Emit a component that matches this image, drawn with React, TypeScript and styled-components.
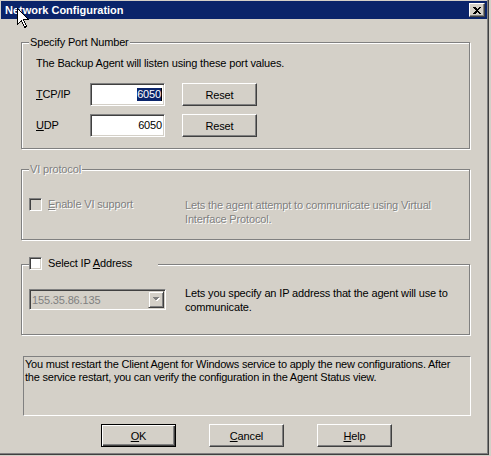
import React from 'react'
import styled, { createGlobalStyle } from 'styled-components'

const GlobalStyle = createGlobalStyle`
  html, body {
    margin: 0;
    padding: 0;
    background: #d4d0c8;
  }
  body {
    font-family: "Liberation Sans", Arial, sans-serif;
    font-size: 11px;
    letter-spacing: -0.15px;
    color: #000;
  }
`

const Window = styled.div`
  position: relative;
  box-sizing: border-box;
  width: 489px;
  height: 455px;
  padding: 1px 0 0 1px;
  background: #d4d0c8;
  border-right: 1px solid #404040;
  border-bottom: 1px solid #404040;
  box-shadow: inset -1px -1px 0 #808080;
  display: flex;
  flex-direction: column;
`

const TitleBar = styled.div`
  height: 18px;
  margin-right: 1px;
  background: #0a246a;
  color: #fff;
  display: flex;
  align-items: center;
  justify-content: space-between;
  padding: 0 2px 0 4px;
`

const TitleText = styled.span`
  font-weight: bold;
  font-size: 11px;
  line-height: 13px;
  letter-spacing: 0;
`

const CloseButton = styled.div`
  box-sizing: border-box;
  width: 16px;
  height: 14px;
  background: #d4d0c8;
  border: 1px solid;
  border-color: #fff #404040 #404040 #fff;
  box-shadow: inset -1px -1px 0 #808080;
  display: flex;
  align-items: center;
  justify-content: center;
`

const Cursor = styled.svg`
  position: absolute;
  left: 17px;
  top: 8px;
  pointer-events: none;
`

const Body = styled.div`
  display: flex;
  flex-direction: column;
  padding: 23px 0 0 20px;
`

const Group = styled.div<{ $h: number; $gap?: number }>`
  position: relative;
  box-sizing: border-box;
  width: 449px;
  height: ${p => p.$h}px;
  margin-bottom: ${p => p.$gap ?? 0}px;
  border: 1px solid #808080;
  box-shadow: inset 1px 1px 0 #fff, 1px 1px 0 #fff;
`

const Legend = styled.div<{ $disabled?: boolean }>`
  position: absolute;
  top: -7px;
  left: 7px;
  padding: 0 1px;
  line-height: 13px;
  background: #d4d0c8;
  color: ${p => (p.$disabled ? '#808080' : '#000')};
  text-shadow: ${p => (p.$disabled ? '1px 1px 0 #fff' : 'none')};
`

const CheckLegend = styled.div`
  position: absolute;
  top: -8px;
  left: 7px;
  width: 129px;
  height: 13px;
  background: #d4d0c8;
  display: flex;
  align-items: center;
  gap: 6px;
`

const PortBody = styled.div`
  padding: 14px 0 0 14px;
  display: flex;
  flex-direction: column;
`

const Intro = styled.div`
  line-height: 13px;
  margin-bottom: 13px;
`

const PortRow = styled.div`
  display: flex;
  align-items: center;
  margin-bottom: 8px;
`

const PortLabel = styled.span`
  width: 54px;
  line-height: 13px;
`

const Key = styled.span`
  text-decoration: underline;
`

const PortInput = styled.div`
  box-sizing: border-box;
  width: 75px;
  height: 23px;
  margin-right: 17px;
  background: #fff;
  border: 1px solid;
  border-color: #808080 #fff #fff #808080;
  box-shadow: inset 1px 1px 0 #404040, inset -1px -1px 0 #d4d0c8;
  display: flex;
  align-items: center;
  justify-content: flex-end;
  padding-right: 2px;
  line-height: 13px;
`

const Selected = styled.span`
  background: #0a246a;
  color: #fff;
  border-right: 1px solid #000;
`

const Button = styled.button<{ $default?: boolean }>`
  box-sizing: border-box;
  width: 75px;
  height: 23px;
  padding: 0;
  margin: 0;
  background: #d4d0c8;
  font-family: "Liberation Sans", Arial, sans-serif;
  font-size: 11px;
  letter-spacing: -0.15px;
  color: #000;
  border: 1px solid;
  border-color: ${p => (p.$default ? '#000' : '#fff #404040 #404040 #fff')};
  box-shadow: ${p =>
    p.$default
      ? 'inset 1px 1px 0 #fff, inset -1px -1px 0 #404040, inset -2px -2px 0 #808080'
      : 'inset -1px -1px 0 #808080'};
`

const OptionRow = styled.div<{ $top: number }>`
  display: flex;
  align-items: flex-start;
  padding: ${p => p.$top}px 0 0 7px;
`

const LeftCol = styled.div`
  width: 156px;
  display: flex;
  align-items: center;
  gap: 6px;
`

const Checkbox = styled.span<{ $disabled?: boolean }>`
  box-sizing: border-box;
  flex: none;
  width: 13px;
  height: 13px;
  background: ${p => (p.$disabled ? '#d4d0c8' : '#fff')};
  border: 1px solid;
  border-color: #808080 #fff #fff #808080;
  box-shadow: inset 1px 1px 0 #404040, inset -1px -1px 0 #d4d0c8;
`

const OptionLabel = styled.span<{ $disabled?: boolean }>`
  line-height: 13px;
  color: ${p => (p.$disabled ? '#808080' : '#000')};
  text-shadow: ${p => (p.$disabled ? '1px 1px 0 #fff' : 'none')};
`

const Desc = styled.div<{ $disabled?: boolean }>`
  width: 275px;
  line-height: 14px;
  color: ${p => (p.$disabled ? '#808080' : '#000')};
  text-shadow: ${p => (p.$disabled ? '1px 1px 0 #fff' : 'none')};
`

const Combo = styled.div`
  box-sizing: border-box;
  width: 137px;
  height: 21px;
  margin-top: 3px;
  border: 1px solid;
  border-color: #808080 #fff #fff #808080;
  box-shadow: inset 1px 1px 0 #404040, inset -1px -1px 0 #d4d0c8;
  padding: 1px 1px 1px 2px;
  display: flex;
  align-items: center;
  justify-content: space-between;
  color: #808080;
`

const ComboArrow = styled.div`
  box-sizing: border-box;
  width: 16px;
  height: 17px;
  background: #d4d0c8;
  border: 1px solid;
  border-color: #d4d0c8 #404040 #404040 #d4d0c8;
  box-shadow: inset 1px 1px 0 #fff, inset -1px -1px 0 #808080;
  display: flex;
  align-items: center;
  justify-content: center;
`

const Message = styled.div`
  box-sizing: border-box;
  width: 448px;
  height: 60px;
  margin: 21px 0 0 2px;
  padding: 1px 0 0 1px;
  border: 1px solid;
  border-color: #808080 #fff #fff #808080;
  line-height: 13px;
  letter-spacing: -0.22px;
  white-space: nowrap;
`

const ButtonBar = styled.div`
  display: flex;
  gap: 33px;
  margin: 8px 0 0 80px;
`

export default function App() {
  return (
    <>
      <GlobalStyle />
      <Window>
        <TitleBar>
          <TitleText>Network Configuration</TitleText>
          <CloseButton>
            <svg width="8" height="7" viewBox="0 0 8 7" shapeRendering="crispEdges">
              <path d="M0 0h2l2 2 2-2h2v1L5 3.5 8 6v1H6L4 5 2 7H0V6l3-2.5L0 1z" fill="#000" />
            </svg>
          </CloseButton>
        </TitleBar>

        <Body>
          <Group $h={107} $gap={20}>
            <Legend>Specify Port Number</Legend>
            <PortBody>
              <Intro>The Backup Agent will listen using these port values.</Intro>
              <PortRow>
                <PortLabel><Key>T</Key>CP/IP</PortLabel>
                <PortInput><Selected>6050</Selected></PortInput>
                <Button>Reset</Button>
              </PortRow>
              <PortRow>
                <PortLabel><Key>U</Key>DP</PortLabel>
                <PortInput>6050</PortInput>
                <Button>Reset</Button>
              </PortRow>
            </PortBody>
          </Group>

          <Group $h={71} $gap={24}>
            <Legend $disabled>VI protocol</Legend>
            <OptionRow $top={28}>
              <LeftCol>
                <Checkbox $disabled />
                <OptionLabel $disabled><Key>E</Key>nable VI support</OptionLabel>
              </LeftCol>
              <Desc $disabled>
                Lets the agent attempt to communicate using Virtual Interface Protocol.
              </Desc>
            </OptionRow>
          </Group>

          <Group $h={71}>
            <CheckLegend>
              <Checkbox />
              <OptionLabel>Select IP <Key>A</Key>ddress</OptionLabel>
            </CheckLegend>
            <OptionRow $top={21}>
              <LeftCol>
                <Combo>
                  <span>155.35.86.135</span>
                  <ComboArrow>
                    <svg width="8" height="5" viewBox="0 0 8 5" shapeRendering="crispEdges">
                      <path d="M1 1h7L4.5 4.5z" fill="#fff" />
                      <path d="M0 0h7L3.5 3.5z" fill="#808080" />
                    </svg>
                  </ComboArrow>
                </Combo>
              </LeftCol>
              <Desc>
                Lets you specify an IP address that the agent will use to communicate.
              </Desc>
            </OptionRow>
          </Group>

          <Message>
            You must restart the Client Agent for Windows service to apply the new configurations. After
            <br />
            the service restart, you can verify the configuration in the Agent Status view.
          </Message>

          <ButtonBar>
            <Button $default><Key>O</Key>K</Button>
            <Button><Key>C</Key>ancel</Button>
            <Button><Key>H</Key>elp</Button>
          </ButtonBar>
        </Body>

        <Cursor width="13" height="21" viewBox="0 0 13 21" shapeRendering="crispEdges">
          <path
            d="M0.5 0.5 L0.5 16.5 L4.5 12.5 L7.5 19.5 L9.5 18.5 L6.5 11.5 L11.5 11.5 Z"
            fill="#fff"
            stroke="#000"
            strokeWidth="1"
          />
        </Cursor>
      </Window>
    </>
  )
}
